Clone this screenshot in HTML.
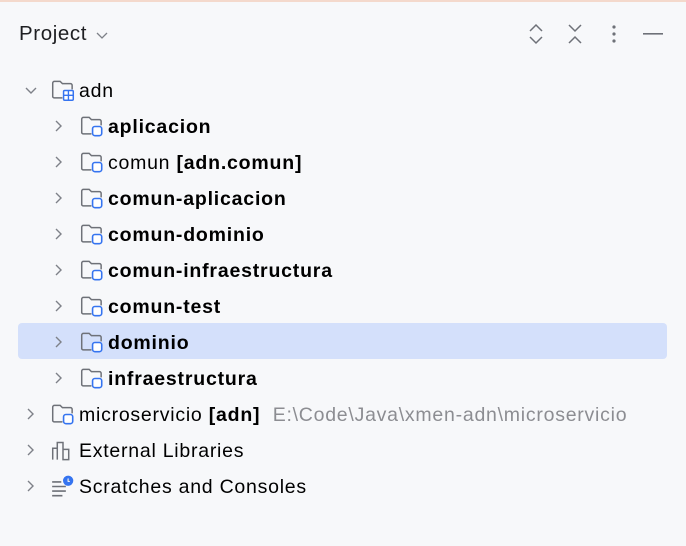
<!DOCTYPE html><html><head><style>
body{margin:0;width:686px;height:546px;background:#f7f8fa;font-family:"Liberation Sans",sans-serif;color:#000;overflow:hidden;position:relative}
.top{position:absolute;left:0;top:0;width:686px;height:2px;background:#f4d9cc}
.title{position:absolute;left:19px;top:22px;font-size:20.5px;letter-spacing:0.6px;color:#1e1f22}
.row{position:absolute;left:0;height:36px;font-size:19.5px;letter-spacing:0.75px;line-height:38px;white-space:nowrap}
.sel{position:absolute;left:18px;top:323px;width:649px;height:36px;background:#d4e0fb;border-radius:4px}
.b{font-weight:bold;letter-spacing:0.8px}
.g{color:#8c8d92}
svg{position:absolute}
</style></head><body>
<div class="top"></div>
<div class="title">Project <svg style="position:static;vertical-align:middle;margin-left:2px" width="14" height="10" viewBox="0 0 14 10"><path d="M2 3l5 5 5-5" stroke="#7e8188" stroke-width="1.3" fill="none"/></svg></div>
<svg style="left:527px;top:23px" width="18" height="22" viewBox="0 0 18 22"><path d="M3 8l6-6 6 6M3 14l6 6 6-6" stroke="#6e7178" stroke-width="1.5" fill="none"/></svg>
<svg style="left:566px;top:23px" width="18" height="22" viewBox="0 0 18 22"><path d="M3 2l6 6 6-6M3 20l6-6 6 6" stroke="#6e7178" stroke-width="1.5" fill="none"/></svg>
<svg style="left:610px;top:24px" width="8" height="20"><circle cx="4" cy="3" r="1.6" fill="#6e7178"/><circle cx="4" cy="10" r="1.6" fill="#6e7178"/><circle cx="4" cy="17" r="1.6" fill="#6e7178"/></svg>
<svg style="left:643px;top:33px" width="20" height="2"><rect width="20" height="1.6" fill="#6e7178"/></svg>
<div class="sel"></div>
<div id="rows"></div>
<script>
const F='<path d="M1.5 16V3.5a1.5 1.5 0 0 1 1.5-1.5h5l2 2h7a1.5 1.5 0 0 1 1.5 1.5V9M10 16.5H3a1.5 1.5 0 0 1-1.5-1.5" stroke="#6e7178" stroke-width="1.3" fill="none"/>';
const M=F+'<rect x="11" y="10" width="8" height="8" rx="2" stroke="#3574f0" stroke-width="1.4" fill="#fff"/>';
const A=F+'<rect x="11" y="10" width="8.5" height="8.5" rx="1" stroke="#3574f0" stroke-width="1.3" fill="#fff"/><path d="M15.25 10v8.5M11 14.25h8.5" stroke="#3574f0" stroke-width="1.2"/>';
const L='<path d="M1.5 18V8h4v10M5.5 18V3h5v15M10.5 18V9h5v9z" stroke="#6e7178" stroke-width="1.3" fill="none"/>';
const S='<path d="M1 6h8M1 10h12M1 14h12M1 18h9" stroke="#6e7178" stroke-width="1.4"/><circle cx="15" cy="5" r="4.5" fill="#3574f0"/><path d="M15 3v2.5h1.5" stroke="#fff" stroke-width="1"/>';
const rows=[
[90,30,51,A,'adn',0,'v'],
[126,58,80,M,'<span class="b">aplicacion</span>'],
[162,58,80,M,'comun <span class="b">[adn.comun]</span>'],
[198,58,80,M,'<span class="b">comun-aplicacion</span>'],
[234,58,80,M,'<span class="b">comun-dominio</span>'],
[270,58,80,M,'<span class="b">comun-infraestructura</span>'],
[306,58,80,M,'<span class="b">comun-test</span>'],
[342,58,80,M,'<span class="b">dominio</span>'],
[378,58,80,M,'<span class="b">infraestructura</span>'],
[414,30,51,M,'microservicio <span class="b">[adn]</span>&nbsp; <span class="g">E:\\Code\\Java\\xmen-adn\\microservicio</span>'],
[450,30,51,L,'External Libraries'],
[486,30,51,S,'Scratches and Consoles']];
let h='';
for(const r of rows){const [c,ax,ix,ic,t,,v]=r;const top=c-18;
const arrow=v?'<path d="M2 5l5 5 5-5" stroke="#7e8188" stroke-width="1.4" fill="none"/>':'<path d="M4 2l5 5-5 5" stroke="#7e8188" stroke-width="1.4" fill="none"/>';
h+=`<svg style="left:${ax-6}px;top:${c-7}px" width="14" height="14">${arrow}</svg><svg style="left:${ix}px;top:${c-11}px" width="24" height="23" viewBox="0 0 21 20">${ic}</svg><div class="row" style="top:${top}px;left:${ix+28}px">${t}</div>`;}
document.getElementById('rows').innerHTML=h;
</script>
</body></html>
